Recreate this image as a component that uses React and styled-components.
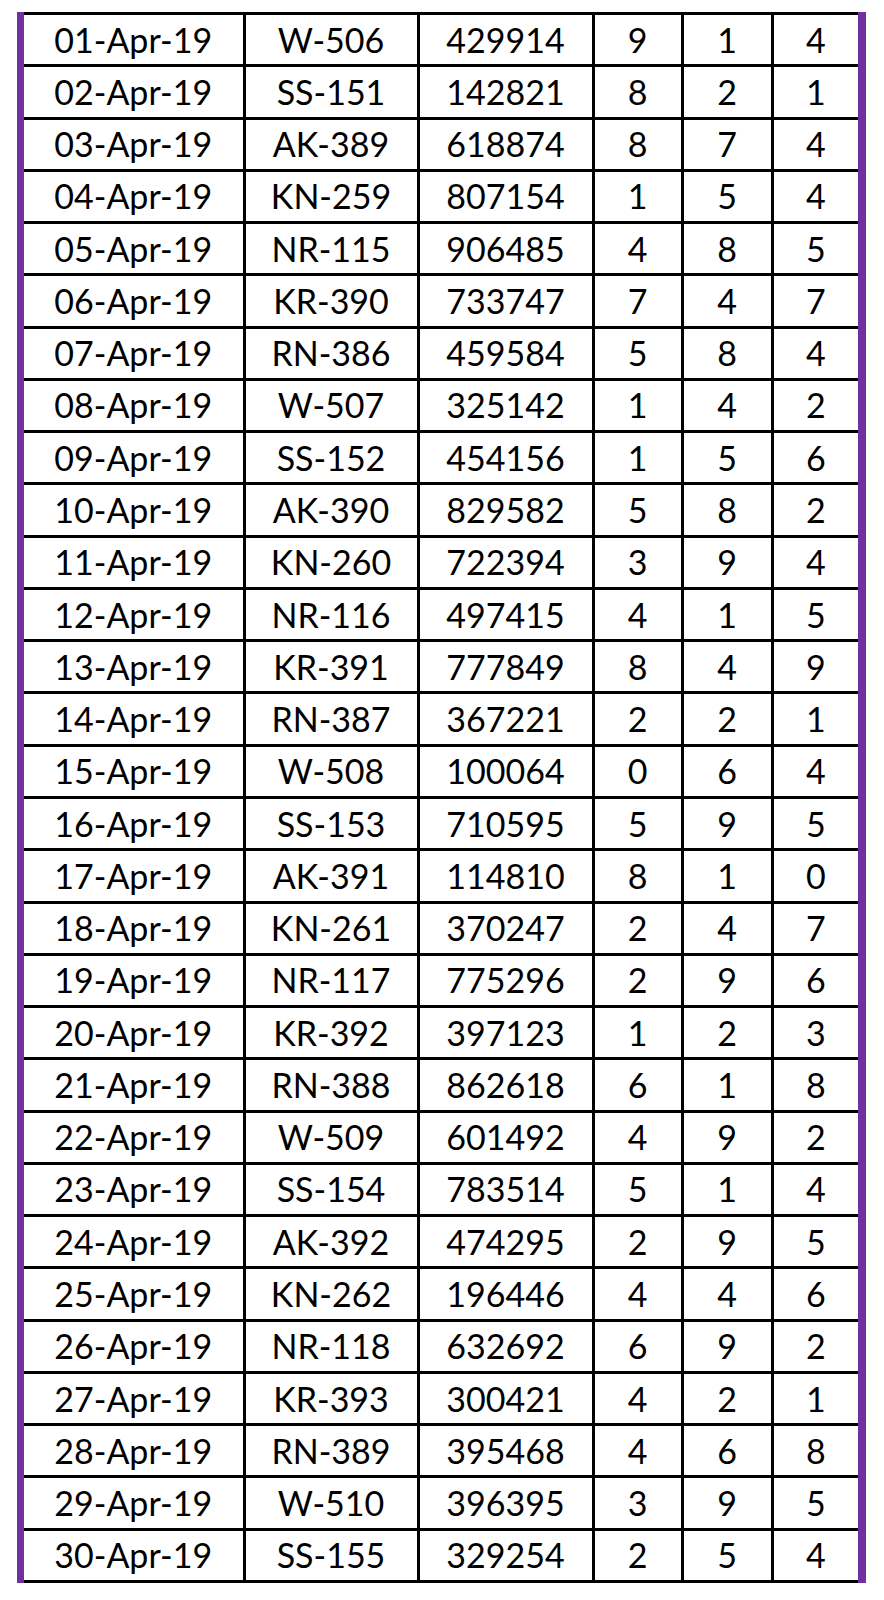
import React from "react";
import styled, { createGlobalStyle } from "styled-components";

const raw = `01-Apr-19 W-506 429914 9 1 4
02-Apr-19 SS-151 142821 8 2 1
03-Apr-19 AK-389 618874 8 7 4
04-Apr-19 KN-259 807154 1 5 4
05-Apr-19 NR-115 906485 4 8 5
06-Apr-19 KR-390 733747 7 4 7
07-Apr-19 RN-386 459584 5 8 4
08-Apr-19 W-507 325142 1 4 2
09-Apr-19 SS-152 454156 1 5 6
10-Apr-19 AK-390 829582 5 8 2
11-Apr-19 KN-260 722394 3 9 4
12-Apr-19 NR-116 497415 4 1 5
13-Apr-19 KR-391 777849 8 4 9
14-Apr-19 RN-387 367221 2 2 1
15-Apr-19 W-508 100064 0 6 4
16-Apr-19 SS-153 710595 5 9 5
17-Apr-19 AK-391 114810 8 1 0
18-Apr-19 KN-261 370247 2 4 7
19-Apr-19 NR-117 775296 2 9 6
20-Apr-19 KR-392 397123 1 2 3
21-Apr-19 RN-388 862618 6 1 8
22-Apr-19 W-509 601492 4 9 2
23-Apr-19 SS-154 783514 5 1 4
24-Apr-19 AK-392 474295 2 9 5
25-Apr-19 KN-262 196446 4 4 6
26-Apr-19 NR-118 632692 6 9 2
27-Apr-19 KR-393 300421 4 2 1
28-Apr-19 RN-389 395468 4 6 8
29-Apr-19 W-510 396395 3 9 5
30-Apr-19 SS-155 329254 2 5 4`;

const rows = raw.split("\n").map((line) => line.trim().split(" "));
const colWidths = [220, 174, 175, 89, 90, 86];

const GlobalStyle = createGlobalStyle`
  body {
    margin: 0;
    background: #ffffff;
  }
`;

const Page = styled.div`
  padding: 12px 0 0 17px;
`;

const Frame = styled.div`
  display: inline-block;
  border-left: 7px solid #7030a0;
  border-right: 8px solid #7030a0;
`;

const Sheet = styled.table`
  border-collapse: collapse;
  table-layout: fixed;
  width: 834px;
  font-family: Lato, "Open Sans", sans-serif;
  font-size: 34px;
  color: #000;
`;

const Cell = styled.td`
  height: 49.27px;
  padding: 0;
  line-height: 1;
  text-align: center;
  vertical-align: middle;
  border-top: 3px solid #000;
  border-bottom: 3px solid #000;
  border-left: ${({ $first }) => ($first ? "none" : "3px solid #000")};
  border-right: ${({ $last }) => ($last ? "none" : "3px solid #000")};
`;

const App = () => (
  <Page>
    <GlobalStyle />
    <Frame>
      <Sheet>
        <colgroup>
          {colWidths.map((w, i) => (
            <col key={i} style={{ width: w }} />
          ))}
        </colgroup>
        <tbody>
          {rows.map((row) => (
            <tr key={row[0]}>
              {row.map((value, i) => (
                <Cell key={i} $first={i === 0} $last={i === row.length - 1}>
                  {value}
                </Cell>
              ))}
            </tr>
          ))}
        </tbody>
      </Sheet>
    </Frame>
  </Page>
);

export default App;
